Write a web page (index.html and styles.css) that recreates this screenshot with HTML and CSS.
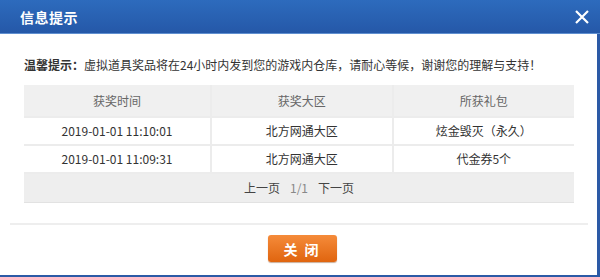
FILE: index.html
```html
<!DOCTYPE html>
<html lang="zh">
<head>
<meta charset="utf-8">
<link rel="stylesheet" href="styles.css">
</head>
<body>
<div class="dialog">
  <div class="titlebar">
    <span class="title">信息提示</span>
    <span class="close">
      <svg width="14" height="14" viewBox="0 0 14 14"><path d="M1 1L13 13M13 1L1 13" stroke="#fff" stroke-width="2.2" fill="none"/></svg>
    </span>
  </div>
  <div class="body">
    <p class="tip"><b>温馨提示：</b>虚拟道具奖品将在24小时内发到您的游戏内仓库，请耐心等候，谢谢您的理解与支持！</p>
    <table class="grid">
      <colgroup><col class="c1"><col class="c2"><col class="c3"></colgroup>
      <thead>
        <tr><th>获奖时间</th><th>获奖大区</th><th>所获礼包</th></tr>
      </thead>
      <tbody>
        <tr><td>2019-01-01 11:10:01</td><td>北方网通大区</td><td>炫金毁灭（永久）</td></tr>
        <tr><td>2019-01-01 11:09:31</td><td>北方网通大区</td><td>代金券5个</td></tr>
        <tr class="pager"><td colspan="3"><span>上一页</span><span class="num">1/1</span><span>下一页</span></td></tr>
      </tbody>
    </table>
  </div>
  <div class="footer">
    <button class="btn">关 闭</button>
  </div>
</div>
</body>
</html>
```

FILE: styles.css
```css
html, body {
  margin: 0;
  padding: 0;
  width: 600px;
  height: 277px;
  overflow: hidden;
  background: #3a5d8f;
  font-family: "Noto Sans CJK SC", "Microsoft YaHei", sans-serif;
}
.dialog {
  width: 597px;
  height: 275px;
  background: #fff;
  border-right: 3px solid #2c5aa6;
  border-bottom: 2px solid #2c5aa6;
  display: flex;
  flex-direction: column;
}
.titlebar {
  height: 34px;
  margin-right: -3px;
  background: linear-gradient(#2d6bbd, #2558a8);
  border-bottom: 1px solid #5f8fd0;
  display: flex;
  align-items: center;
  justify-content: space-between;
  padding: 0 11px 0 20px;
  box-sizing: border-box;
}
.title {
  color: #fff;
  font-size: 14px;
  font-weight: bold;
  letter-spacing: 0.5px;
}
.close {
  display: flex;
}
.body {
  padding: 0 23px 0 24px;
}
.tip {
  margin: 23px 0 12px;
  font-size: 12px;
  line-height: 16px;
  color: #333;
}
.grid {
  width: 100%;
  border-collapse: collapse;
  font-size: 12px;
  line-height: 16px;
  color: #333;
  table-layout: fixed;
}
.c1 { width: 34%; }
.c2 { width: 33%; }
.c3 { width: 33%; }
.grid th {
  background: #f0f0f0;
  color: #666;
  font-weight: normal;
  height: 31px;
  padding: 0;
  border: 2px solid #ececec;
  border-top: none;
  border-bottom: none;
}
.grid td {
  height: 26px;
  padding: 0;
  text-align: center;
  border: 2px solid #ececec;
}
.grid tr > :first-child { border-left: none; }
.grid tr > :last-child { border-right: none; }
.grid .pager td {
  background: #eeeeee;
  height: 28px;
  color: #444;
  border-bottom: 1px solid #e2e2e2;
}
.pager span { margin: 0 4px; }
.pager .num { color: #888; margin: 0 6px; }
.footer {
  margin: 20px 9px 0 10px;
  border-top: 2px solid #eeeeee;
  display: flex;
  justify-content: center;
  padding-top: 10px;
}
.btn {
  width: 69px;
  height: 27px;
  border: none;
  border-radius: 3px;
  background: linear-gradient(#f58b3a, #e0650f);
  box-shadow: 0 1px 1px rgba(120,50,0,0.4);
  color: #fff;
  font-family: inherit;
  font-size: 14px;
  font-weight: bold;
  letter-spacing: 2px;
  margin-left: 6px;
  padding: 0;
}
```
